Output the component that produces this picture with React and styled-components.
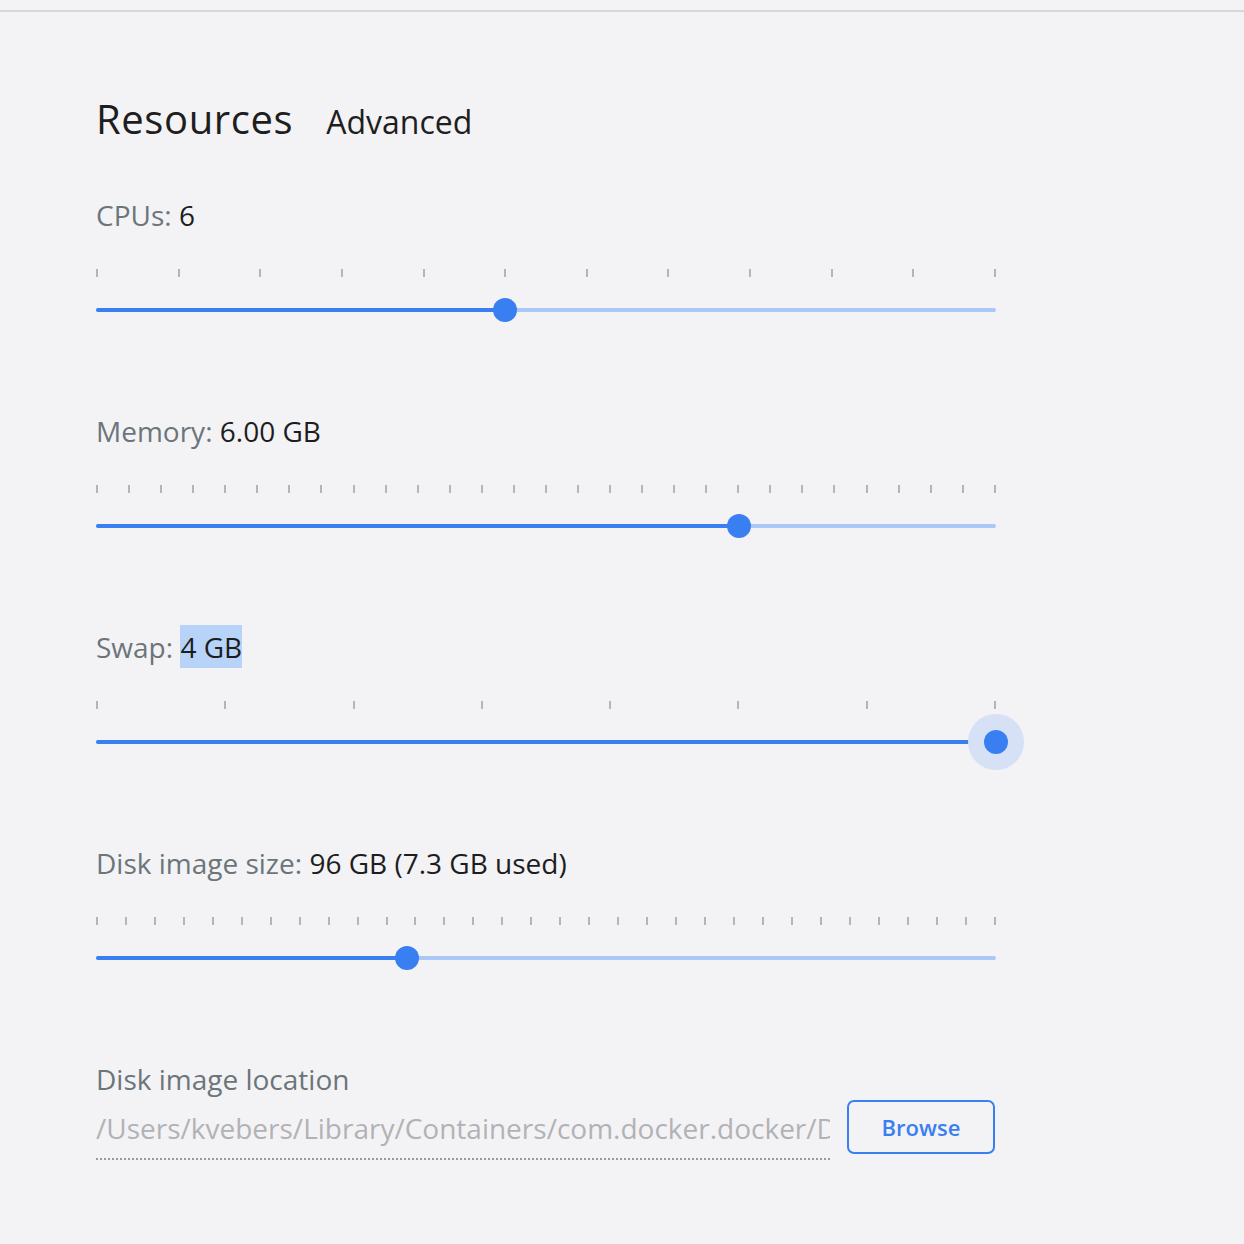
import React from "react";
import styled, { createGlobalStyle } from "styled-components";

const GlobalStyle = createGlobalStyle`
  html, body {
    margin: 0;
    padding: 0;
    background: #f3f3f5;
  }
  body {
    font-family: "Open Sans", "Noto Sans", sans-serif;
    -webkit-font-smoothing: antialiased;
  }
`;

const Page = styled.div`
  margin-top: 10px;
  border-top: 2px solid #d7d7da;
  min-height: 1232px;
  box-sizing: border-box;
  background: #f3f3f5;
`;

const Content = styled.div`
  width: 900px;
  padding: 83px 0 0 96px;
  display: flex;
  flex-direction: column;
`;

const Tabs = styled.div`
  display: flex;
  align-items: baseline;
  gap: 33px;
  margin-bottom: 49px;
`;

const Tab = styled.div`
  font-size: ${(p) => (p.$active ? "40px" : "32px")};
  line-height: 48px;
  color: #1e1e20;
  letter-spacing: ${(p) => (p.$active ? "0.6px" : "0")};
`;

const Setting = styled.section`
  display: flex;
  flex-direction: column;
  margin-bottom: 89px;
`;

const Label = styled.div`
  font-size: 28px;
  line-height: 40px;
  color: #6c757a;
`;

const Value = styled.span`
  color: #1d1d1f;
  padding: 3px 0 2px;
  background: ${(p) => (p.$selected ? "#b7d4f8" : "transparent")};
`;

const Ticks = styled.div`
  display: flex;
  justify-content: space-between;
  margin-top: 34px;
  height: 8px;
`;

const Tick = styled.span`
  width: 2px;
  height: 8px;
  background: #b5b5b8;
`;

const TrackBox = styled.div`
  position: relative;
  height: 24px;
  margin-top: 21px;
  display: flex;
  align-items: center;
`;

const Rail = styled.div`
  position: relative;
  width: 100%;
  height: 4px;
  border-radius: 2px;
  background: #abc7f7;
`;

const Fill = styled.div`
  height: 100%;
  border-radius: 2px;
  background: #3a7ff2;
`;

const Thumb = styled.div`
  position: absolute;
  top: 50%;
  width: 24px;
  height: 24px;
  margin: -12px 0 0 -12px;
  border-radius: 50%;
  background: #3a7ff2;
  box-shadow: ${(p) => (p.$focused ? "0 0 0 16px #d6e1f6" : "none")};
`;

const LocationRow = styled.div`
  display: flex;
  align-items: flex-start;
  margin-top: 1px;
`;

const PathField = styled.div`
  width: 734px;
  height: 60px;
  box-sizing: border-box;
  border-bottom: 2px dotted #9a9a9e;
  display: flex;
  align-items: center;
  overflow: hidden;
  white-space: nowrap;
  font-size: 28px;
  color: #b2b2b5;
  padding-bottom: 2px;
`;

const BrowseButton = styled.button`
  margin-left: 17px;
  width: 148px;
  height: 54px;
  box-sizing: border-box;
  border: 2px solid #3a7ff2;
  border-radius: 7px;
  background: transparent;
  color: #3a7ff2;
  font-family: "Open Sans", "Noto Sans", sans-serif;
  font-size: 22px;
  font-weight: 600;
  cursor: pointer;
`;

function Slider({ ticks, percent, focused }) {
  return (
    <>
      <Ticks>
        {Array.from({ length: ticks }, (_, i) => (
          <Tick key={i} />
        ))}
      </Ticks>
      <TrackBox>
        <Rail>
          <Fill style={{ width: `${percent}%` }} />
          <Thumb $focused={focused} style={{ left: `${percent}%` }} />
        </Rail>
      </TrackBox>
    </>
  );
}

const settings = [
  { name: "CPUs", value: "6", ticks: 12, percent: (5 / 11) * 100 },
  { name: "Memory", value: "6.00 GB", ticks: 29, percent: (20 / 28) * 100 },
  { name: "Swap", value: "4 GB", ticks: 8, percent: 100, focused: true, selected: true },
  { name: "Disk image size", value: "96 GB (7.3 GB used)", ticks: 32, percent: 34.6 },
];

export default function App() {
  return (
    <>
      <GlobalStyle />
      <Page>
        <Content>
          <Tabs>
            <Tab $active>Resources</Tab>
            <Tab>Advanced</Tab>
          </Tabs>
          {settings.map((s) => (
            <Setting key={s.name}>
              <Label>
                {s.name}: <Value $selected={s.selected}>{s.value}</Value>
              </Label>
              <Slider ticks={s.ticks} percent={s.percent} focused={s.focused} />
            </Setting>
          ))}
          <Label>Disk image location</Label>
          <LocationRow>
            <PathField>/Users/kvebers/Library/Containers/com.docker.docker/Data/vms/0/data</PathField>
            <BrowseButton>Browse</BrowseButton>
          </LocationRow>
        </Content>
      </Page>
    </>
  );
}
